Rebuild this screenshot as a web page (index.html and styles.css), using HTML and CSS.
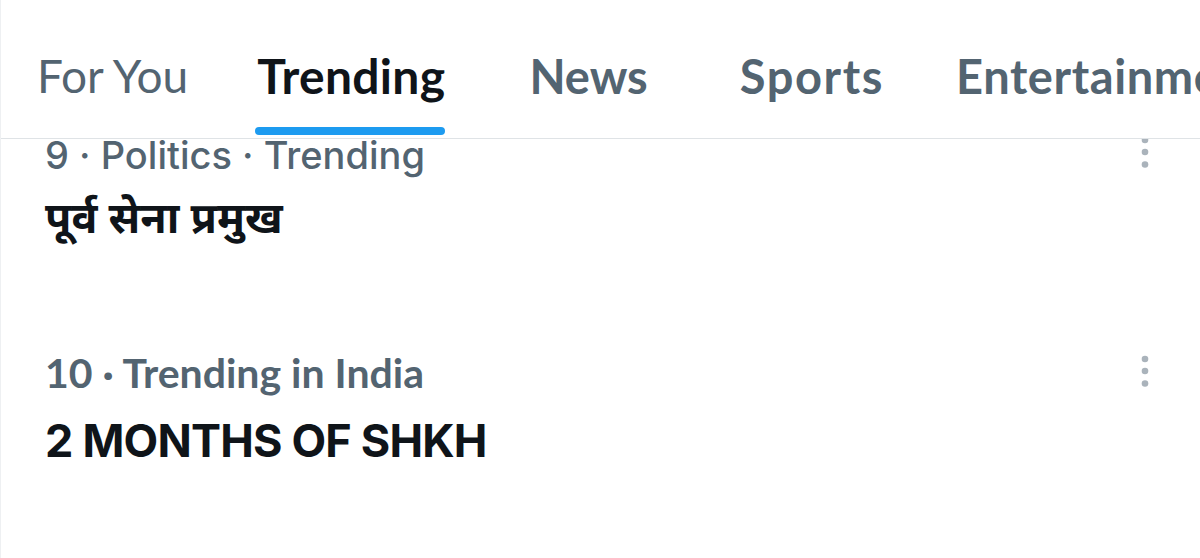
FILE: index.html
```html
<!DOCTYPE html>
<html lang="en">
<head>
<meta charset="utf-8">
<link rel="stylesheet" href="styles.css">
</head>
<body>
<div class="page">
  <nav class="tabs">
    <div class="tab tab-foryou"><span class="tab-label">For You</span></div>
    <div class="tab tab-trending is-active"><span class="tab-label">Trending</span><span class="indicator"></span></div>
    <div class="tab tab-news"><span class="tab-label">News</span></div>
    <div class="tab tab-sports"><span class="tab-label">Sports</span></div>
    <div class="tab tab-ent"><span class="tab-label">Entertainment</span></div>
  </nav>
  <main class="list">
    <article class="trend trend-first">
      <div class="trend-body">
        <div class="meta meta-inter">9 · Politics · Trending</div>
        <div class="title title-hindi">पूर्व सेना प्रमुख</div>
      </div>
      <svg class="more" width="12" height="36" viewBox="0 0 12 36"><circle cx="6" cy="6" r="3.3"/><circle cx="6" cy="18" r="3.3"/><circle cx="6" cy="30.5" r="3.3"/></svg>
    </article>
    <article class="trend">
      <div class="trend-body">
        <div class="meta meta-lato">10 · Trending in India</div>
        <div class="title">2 MONTHS OF SHKH</div>
      </div>
      <svg class="more" width="12" height="36" viewBox="0 0 12 36"><circle cx="6" cy="6" r="3.3"/><circle cx="6" cy="18" r="3.3"/><circle cx="6" cy="30.5" r="3.3"/></svg>
    </article>
  </main>
</div>
</body>
</html>
```
FILE: styles.css
```css
* { box-sizing: border-box; }
html, body { margin: 0; padding: 0; background: #fff; }
body { width: 1200px; height: 558px; overflow: hidden; }
.page {
  display: flex;
  flex-direction: column;
  height: 558px;
  border-left: 1px solid #eef0f2;
}
.tabs {
  display: flex;
  height: 139px;
  border-bottom: 1px solid #dfe3e6;
  position: relative;
  z-index: 2;
  background: #fff;
  white-space: nowrap;
  overflow: hidden;
}
.tab {
  position: relative;
  display: flex;
  flex-direction: column;
  align-items: stretch;
  padding-top: 51px;
  flex: none;
}
.tab-label {
  font-family: Lato, "Liberation Sans", sans-serif;
  font-size: 47px;
  line-height: 50px;
  color: #536471;
  font-weight: 700;
}
.tab-foryou { margin-left: 36px; }
.tab-foryou .tab-label { font-weight: 400; font-size: 46px; }
.tab-trending { margin-left: 69px; margin-right: -2px; }
.tab-trending .tab-label { color: #0f1419; font-size: 48px; letter-spacing: 0.3px; }
.tab-news { margin-left: 86px; }
.tab-sports { margin-left: 92px; }
.tab-sports .tab-label { letter-spacing: 1.6px; }
.tab-ent { margin-left: 72px; }
.tab-ent .tab-label { letter-spacing: 0.6px; }
.indicator {
  display: block;
  height: 8px;
  border-radius: 4px;
  background: #1d9bf0;
  margin-top: 26px;
  margin-left: -2px;
}
.list {
  flex: 1;
  overflow: hidden;
}
.trend {
  display: flex;
  justify-content: space-between;
  align-items: flex-start;
  height: 219px;
  padding: 37px 49px 0 44px;
}
.trend-first { margin-top: -37px; }
.meta {
  font-size: 38px;
  line-height: 32px;
  color: #536471;
  white-space: nowrap;
}
.meta-inter { font-family: Inter, "Noto Sans", sans-serif; font-weight: 500; }
.meta-lato { font-family: Lato, "Noto Sans", sans-serif; font-weight: 700; font-size: 41px; position: relative; top: -1px; }
.title {
  margin-top: 24px;
  font-family: Inter, "Liberation Sans", sans-serif;
  font-weight: 700;
  font-size: 45px;
  line-height: 54px;
  letter-spacing: -0.8px;
  color: #0f1419;
  white-space: nowrap;
}
.title-hindi {
  font-family: "Noto Sans", "Noto Sans Devanagari", sans-serif;
  font-size: 43px;
  letter-spacing: 0;
  margin-top: 19px;
}
.more {
  flex: none;
  margin-top: -5px;
  fill: #aab3bb;
}
```
